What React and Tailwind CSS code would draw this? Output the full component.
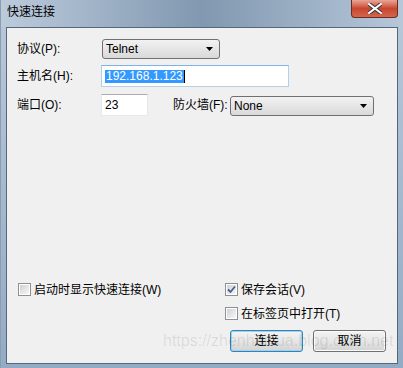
import React from "react";

const font = "font-['Liberation_Sans','Noto_Sans_CJK_SC',sans-serif]";

function Arrow() {
  return (
    <svg width="7" height="4" viewBox="0 0 7 4" className="shrink-0">
      <path d="M0 0H7L3.5 4Z" fill="#000" />
    </svg>
  );
}

function Select({ value, className }) {
  return (
    <div
      className={`flex items-center justify-between h-[20px] rounded-[3px] border border-[#707070] bg-gradient-to-b from-[#f2f2f2] to-[#d9d9d9] pl-[3px] pr-[6px] text-[12px] leading-[14px] text-black ${className}`}
    >
      <span>{value}</span>
      <Arrow />
    </div>
  );
}

function Checkbox({ checked, label }) {
  return (
    <div className="flex items-center h-[13px]">
      <div className="w-[13px] h-[13px] border border-[#8e8f8f] bg-white p-px shrink-0">
        <div className="w-full h-full bg-gradient-to-br from-[#cfd2d6] to-[#f7f7f7] flex items-center justify-center">
          {checked && (
            <svg width="9" height="9" viewBox="0 0 9 9">
              <path d="M1 4.5L3.5 7L8 1.5" fill="none" stroke="#4a5f8f" strokeWidth="1.8" />
            </svg>
          )}
        </div>
      </div>
      <span className="ml-[3px] text-[12px] leading-[14px] text-black whitespace-nowrap">{label}</span>
    </div>
  );
}

function Button({ label, primary }) {
  return (
    <div
      className={`w-[73px] h-[22px] rounded-[3px] border flex items-center justify-center text-[12px] leading-[14px] text-black bg-gradient-to-b from-[#f3f3f3] via-[#e6e6e6] to-[#d3d3d3] ${
        primary ? "border-[#3c7fb1] shadow-[inset_0_0_0_1px_#9ad4f5]" : "border-[#707070] shadow-[inset_0_0_0_1px_#fbfbfb]"
      }`}
    >
      {label}
    </div>
  );
}

export default function App() {
  return (
    <div className={`w-[403px] h-[368px] flex flex-col bg-gradient-to-b from-[#b9c9da] to-[#93abc4] border-l border-[#8a9db2] ${font}`}>
      <div className="relative h-[27px] shrink-0 flex bg-gradient-to-r from-[#bccbdc] via-[#8198b0] to-[#b6c7d9]">
        <span className="pl-[6px] pt-[5px] text-[12px] leading-[14px] text-black">快速连接</span>
        <div className="ml-auto mr-[5px] w-[47px] h-[18px] rounded-b-[4px] border border-t-0 border-[#6e2a22] bg-gradient-to-b from-[#e8a597] via-[#c8452e] to-[#d4664e] flex items-center justify-center">
          <svg width="14" height="11" viewBox="0 0 14 11">
            <path d="M1 1L13 10M13 1L1 10" stroke="#3a3a3a" strokeWidth="4" strokeLinecap="square" />
            <path d="M1 1L13 10M13 1L1 10" stroke="#fff" strokeWidth="2" strokeLinecap="square" />
          </svg>
        </div>
      </div>
      <div className="relative flex-1 mr-[5px] ml-[5px] mb-[4px] border border-[#55677a] bg-[#f0f0f0] flex flex-col justify-between">
        <div className="pt-[11px] pl-[10px]">
          <div className="flex items-center h-[20px]">
            <span className="w-[84px] text-[12px] leading-[14px] text-black">协议(P):</span>
            <Select value="Telnet" className="w-[118px] ml-px" />
          </div>
          <div className="flex items-center h-[22px] mt-[6px]">
            <span className="w-[84px] text-[12px] leading-[14px] text-black">主机名(H):</span>
            <div className="w-[188px] h-[22px] border border-[#b5cfe7] border-t-[#7eb4ea] bg-white flex items-center pl-[3px]">
              <span className="bg-[#3399ff] text-white text-[12px] leading-[13px] px-px">192.168.1.123</span>
              <span className="w-px h-[13px] bg-black" />
            </div>
          </div>
          <div className="flex h-[22px] mt-[7px]">
            <span className="w-[84px] text-[12px] leading-[14px] text-black self-center">端口(O):</span>
            <div className="w-[47px] h-[22px] border border-[#e3e9ef] border-t-[#abadb3] bg-white pl-[3px] pt-[3px] text-[12px] leading-[14px] text-black">
              23
            </div>
            <span className="ml-[25px] w-[57px] text-[12px] leading-[14px] text-black self-center">防火墙(F):</span>
            <Select value="None" className="w-[144px] mt-[2px]" />
          </div>
        </div>
        <div className="flex pb-[11px]">
          <div className="w-[218px] pl-[11px]">
            <Checkbox label="启动时显示快速连接(W)" />
          </div>
          <div className="flex flex-col">
            <Checkbox checked label="保存会话(V)" />
            <div className="mt-[11px]">
              <Checkbox label="在标签页中打开(T)" />
            </div>
            <div className="flex gap-[10px] mt-[10px] ml-[5px]">
              <Button label="连接" primary />
              <Button label="取消" />
            </div>
          </div>
        </div>
        <span className="absolute left-[156px] top-[304px] text-[16px] leading-[18px] text-black/10 whitespace-nowrap">
          https://zhenhaihua.blog.csdn.net
        </span>
      </div>
    </div>
  );
}
